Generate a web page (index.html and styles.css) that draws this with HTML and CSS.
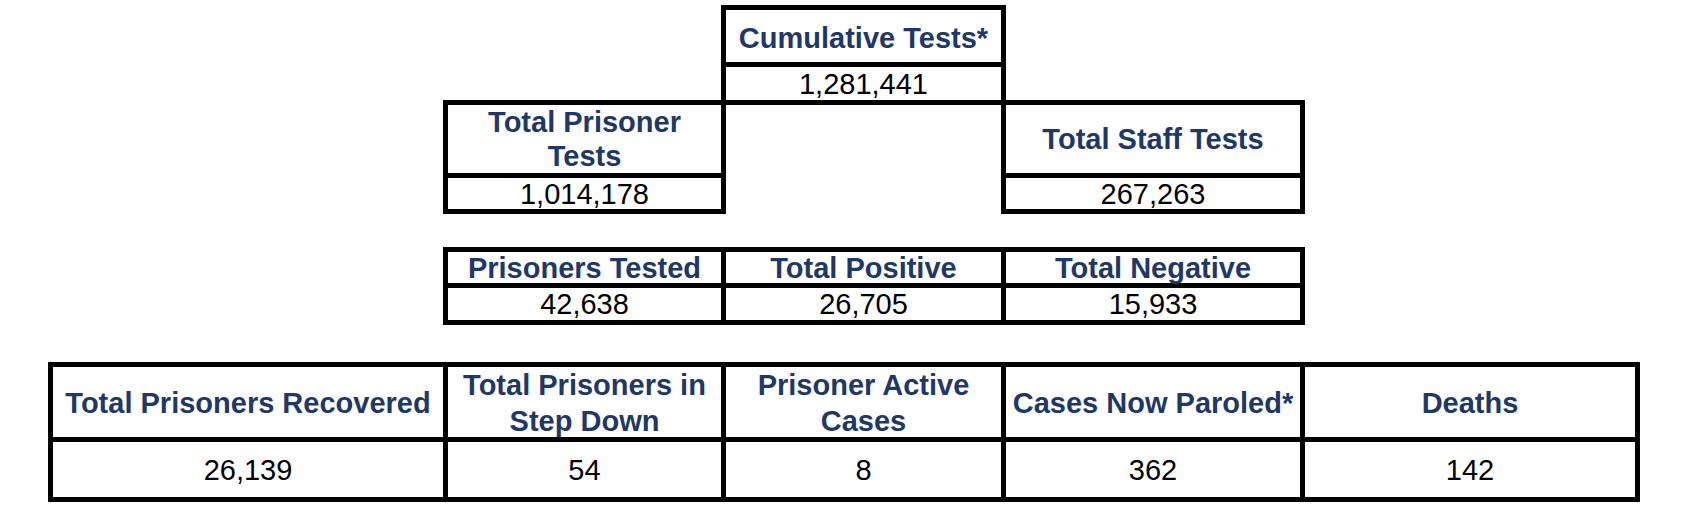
FILE: index.html
```html
<!DOCTYPE html>
<html lang="en">
<head>
<meta charset="utf-8">
<title>Testing Summary</title>
<link rel="stylesheet" href="styles.css">
</head>
<body>
<main class="page">
  <section class="tests">
    <div class="box box-cumulative">
      <div class="cell hd">Cumulative Tests*</div>
      <div class="cell val">1,281,441</div>
    </div>
    <div class="box box-prisoner">
      <div class="cell hd two">Total Prisoner Tests</div>
      <div class="cell val">1,014,178</div>
    </div>
    <div class="box box-staff">
      <div class="cell hd">Total Staff Tests</div>
      <div class="cell val">267,263</div>
    </div>
  </section>

  <section class="grid-table mid">
    <div class="cell hd">Prisoners Tested</div>
    <div class="cell hd">Total Positive</div>
    <div class="cell hd">Total Negative</div>
    <div class="cell val">42,638</div>
    <div class="cell val">26,705</div>
    <div class="cell val">15,933</div>
  </section>

  <section class="grid-table summary">
    <div class="cell hd">Total Prisoners Recovered</div>
    <div class="cell hd">Total Prisoners in Step Down</div>
    <div class="cell hd">Prisoner Active Cases</div>
    <div class="cell hd">Cases Now Paroled*</div>
    <div class="cell hd">Deaths</div>
    <div class="cell val">26,139</div>
    <div class="cell val">54</div>
    <div class="cell val">8</div>
    <div class="cell val">362</div>
    <div class="cell val">142</div>
  </section>
</main>
</body>
</html>
```

FILE: styles.css
```css
html, body {
  margin: 0;
  padding: 0;
  background: #ffffff;
}

body {
  font-family: "Liberation Sans", Arial, sans-serif;
  font-size: 29px;
  color: #000000;
}

.page {
  padding-top: 5px;
}

/* generic cell */
.cell {
  background: #ffffff;
  display: flex;
  align-items: center;
  justify-content: center;
  text-align: center;
  padding: 0;
  overflow: visible;
  white-space: normal;
}

.hd {
  font-weight: 700;
  color: #1f3864;
  line-height: 34px;
}

.val {
  font-weight: 400;
  color: #000000;
  line-height: 30px;
}

/* top cross-shaped block */
.tests {
  display: grid;
  grid-template-columns: 278px 280px 304px;
  grid-template-rows: 100px auto;
  margin-left: 443px;
}

.box {
  display: grid;
  background: #000000;
  padding: 5px;
  row-gap: 5px;
  box-sizing: border-box;
}

.box-cumulative {
  grid-column: 2;
  grid-row: 1;
  width: 285px;
  height: 100px;
  grid-template-rows: 52px 33px;
}

.box-cumulative .hd {
  padding-top: 3px;
}

.box-prisoner {
  grid-column: 1;
  grid-row: 2;
  width: 283px;
  margin-top: -5px;
  grid-template-rows: 68px 31px;
}

.box-staff {
  grid-column: 3;
  grid-row: 2;
  width: 304px;
  margin-top: -5px;
  grid-template-rows: 68px 31px;
}

/* tables drawn as black grid with white cells */
.grid-table {
  display: grid;
  background: #000000;
  padding: 5px;
  gap: 5px;
  box-sizing: border-box;
}

.mid {
  margin-left: 443px;
  margin-top: 33px;
  width: 862px;
  grid-template-columns: 273px 275px 294px;
  grid-template-rows: 31px 32px;
}

.summary {
  margin-left: 48px;
  margin-top: 37px;
  width: 1592px;
  grid-template-columns: 390px 273px 275px 294px 330px;
  grid-template-rows: 70px 55px;
}

.summary .hd {
  line-height: 36px;
  padding-top: 2px;
}
```
